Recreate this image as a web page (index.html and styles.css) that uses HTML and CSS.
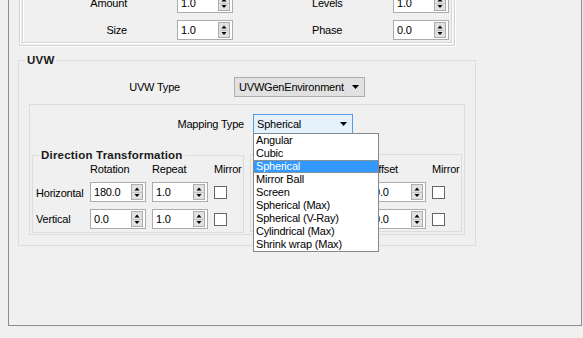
FILE: index.html
```html
<!DOCTYPE html>
<html>
<head>
<meta charset="utf-8">
<title>UVW</title>
<link rel="stylesheet" href="styles.css">
</head>
<body>
<svg class="defs" width="0" height="0" aria-hidden="true">
  <defs>
    <symbol id="spinbtn" viewBox="0 0 12 16">
      <rect x="0.5" y="0.5" width="11" height="15" fill="#e1e1e1" stroke="#adadad"/>
      <path d="M1 8.5h10" stroke="#c4c4c4"/>
      <path d="M3.5 6.5h5L6 3.5z" fill="#000"/>
      <path d="M3.5 10h5L6 13z" fill="#000"/>
    </symbol>
    <symbol id="arrow" viewBox="0 0 7 4">
      <path d="M0 0h7L3.5 4z" fill="#000"/>
    </symbol>
  </defs>
</svg>

<div class="frame">
  <div class="etch etch-outer">
    <div class="etch etch-inner">
      <div class="prop-row">
        <span class="lbl-a">Amount</span>
        <div class="spin"><span class="val">1.0</span><svg class="spin-btn"><use href="#spinbtn"/></svg></div>
        <span class="lbl-b">Levels</span>
        <div class="spin"><span class="val">1.0</span><svg class="spin-btn"><use href="#spinbtn"/></svg></div>
      </div>
      <div class="prop-row">
        <span class="lbl-a">Size</span>
        <div class="spin"><span class="val">1.0</span><svg class="spin-btn"><use href="#spinbtn"/></svg></div>
        <span class="lbl-b">Phase</span>
        <div class="spin"><span class="val">0.0</span><svg class="spin-btn"><use href="#spinbtn"/></svg></div>
      </div>
    </div>
  </div>

  <fieldset class="group uvw">
    <legend>UVW</legend>
    <div class="combo-row uvw-row">
      <span class="uvw-lbl">UVW Type</span>
      <div class="combo uvw-combo"><span>UVWGenEnvironment</span><svg class="arrow"><use href="#arrow"/></svg></div>
    </div>

    <div class="map-box">
      <div class="combo-row map-row">
        <span class="map-lbl">Mapping Type</span>
        <div class="combo map-combo">
          <span>Spherical</span><svg class="arrow"><use href="#arrow"/></svg>
          <ul class="popup">
            <li>Angular</li>
            <li>Cubic</li>
            <li class="sel">Spherical</li>
            <li>Mirror Ball</li>
            <li>Screen</li>
            <li>Spherical (Max)</li>
            <li>Spherical (V-Ray)</li>
            <li>Cylindrical (Max)</li>
            <li>Shrink wrap (Max)</li>
          </ul>
        </div>
      </div>

      <div class="xform-row">
        <fieldset class="group xform">
          <legend>Direction Transformation</legend>
          <div class="xgrid">
            <span></span><span class="hdr">Rotation</span><span class="hdr">Repeat</span><span class="hdr">Mirror</span>
            <span class="rlbl">Horizontal</span>
            <div class="spin"><span class="val">180.0</span><svg class="spin-btn"><use href="#spinbtn"/></svg></div>
            <div class="spin"><span class="val">1.0</span><svg class="spin-btn"><use href="#spinbtn"/></svg></div>
            <span class="check"></span>
            <span class="rlbl">Vertical</span>
            <div class="spin"><span class="val">0.0</span><svg class="spin-btn"><use href="#spinbtn"/></svg></div>
            <div class="spin"><span class="val">1.0</span><svg class="spin-btn"><use href="#spinbtn"/></svg></div>
            <span class="check"></span>
          </div>
        </fieldset>

        <div class="pos-box">
          <div class="xgrid">
            <span></span><span></span><span class="hdr">Offset</span><span class="hdr">Mirror</span>
            <span></span>
            <div class="spin"><svg class="spin-btn"><use href="#spinbtn"/></svg></div>
            <div class="spin"><span class="val">0.0</span><svg class="spin-btn"><use href="#spinbtn"/></svg></div>
            <span class="check"></span>
            <span></span>
            <div class="spin"><svg class="spin-btn"><use href="#spinbtn"/></svg></div>
            <div class="spin"><span class="val">0.0</span><svg class="spin-btn"><use href="#spinbtn"/></svg></div>
            <span class="check"></span>
          </div>
        </div>
      </div>
    </div>
  </fieldset>
</div>
</body>
</html>
```

FILE: styles.css
```css
html, body {
  margin: 0;
  padding: 0;
}

body {
  background: #f0f0f0;
  font-family: "Liberation Sans", Arial, sans-serif;
  font-size: 11px;
  letter-spacing: -0.2px;
  color: #000;
  height: 338px;
  overflow: hidden;
}

.defs {
  position: absolute;
  width: 0;
  height: 0;
}

/* outer scroll frame */
.frame {
  box-sizing: border-box;
  width: 574px;
  margin: -40px 0 0 8px;
  border: 1px solid #8a8d93;
  padding: 0 0 79px 9px;
}

/* top (previous) nested group boxes */
.etch {
  border: 1px solid #d5d5d5;
  box-shadow: inset 1px 1px 0 #fff, 1px 1px 0 #fff;
}

.etch-outer {
  box-sizing: border-box;
  width: 436px;
  margin-left: 1px;
  padding: 2px;
}

.etch-inner {
  padding: 28px 0 2px 0;
  display: flex;
  flex-direction: column;
  gap: 7px;
}

.prop-row {
  display: flex;
  align-items: center;
  height: 20px;
}

.lbl-a {
  width: 104px;
  text-align: right;
  margin-right: 50px;
}

.lbl-b {
  width: 81px;
  margin-left: 79px;
}

/* spin boxes */
.spin {
  box-sizing: border-box;
  width: 56px;
  height: 20px;
  background: #fff;
  border: 1px solid #acacac;
  display: flex;
  align-items: center;
  justify-content: space-between;
  padding: 0 2px 0 3px;
}

.spin .val {
  line-height: 13px;
}

.spin-btn {
  width: 12px;
  height: 16px;
  flex: none;
  margin-left: auto;
}

/* group boxes */
fieldset.group {
  margin: 0;
  padding: 0;
  min-width: 0;
  box-sizing: border-box;
  border: 1px solid #dcdcdc;
}

fieldset.group > legend {
  margin-left: 6px;
  padding: 0 2px;
  font-weight: bold;
  font-size: 11.5px;
  letter-spacing: 0.2px;
  line-height: 13px;
  color: #1a1a1a;
}

fieldset.uvw {
  width: 458px;
  margin-top: 8px;
  padding-bottom: 10px;
}

.combo-row {
  display: flex;
  align-items: center;
  height: 20px;
}

.uvw-row {
  margin-top: 10px;
}

.uvw-lbl {
  width: 161px;
  text-align: right;
  margin-right: 54px;
}

.combo {
  box-sizing: border-box;
  height: 20px;
  display: flex;
  align-items: center;
  justify-content: space-between;
  padding: 0 5px 0 4px;
  border: 1px solid #adadad;
  background: #e1e1e1;
}

.uvw-combo {
  width: 131px;
}

.arrow {
  width: 7px;
  height: 4px;
  flex: none;
}

.map-box {
  box-sizing: border-box;
  width: 436px;
  margin: 7px 0 0 10px;
  border: 1px solid #dcdcdc;
  padding-bottom: 1px;
}

.map-row {
  margin-top: 9px;
}

.map-lbl {
  width: 214px;
  text-align: right;
  margin-right: 9px;
}

.map-combo {
  position: relative;
  width: 100px;
  padding-left: 3px;
  border-color: #569de5;
  background: #e5f1fb;
}

/* dropdown popup list */
.popup {
  position: absolute;
  top: 18px;
  left: -1px;
  z-index: 5;
  box-sizing: border-box;
  width: 126px;
  margin: 0;
  padding: 0;
  list-style: none;
  background: #fff;
  border: 1px solid #828790;
}

.popup li {
  box-sizing: border-box;
  height: 13px;
  line-height: 13px;
  padding-left: 2px;
  white-space: nowrap;
}

.popup li.sel {
  background: #3399ff;
  color: #fff;
  border-top: 1px dotted #d08a3a;
  border-bottom: 1px dotted #d08a3a;
  line-height: 11px;
}

/* transformation groups */
.xform-row {
  display: flex;
  align-items: flex-start;
  gap: 6px;
  margin-top: 15px;
  padding-left: 2px;
}

fieldset.xform {
  width: 212px;
  padding-bottom: 3px;
}

.pos-box {
  box-sizing: border-box;
  width: 212px;
  margin-top: 5px;
  border: 1px solid #dcdcdc;
  padding: 7px 0 2px 0;
}

.xgrid {
  display: grid;
  grid-template-columns: 51px 56px 56px auto;
  grid-template-rows: 14px 21px 20px;
  column-gap: 6px;
  row-gap: 6px;
  align-items: start;
}

.hdr {
  line-height: 14px;
  align-self: center;
}

.rlbl {
  padding-left: 3px;
  align-self: center;
}

.check {
  box-sizing: border-box;
  width: 13px;
  height: 13px;
  background: #fff;
  border: 1px solid #666;
  align-self: center;
}
```
